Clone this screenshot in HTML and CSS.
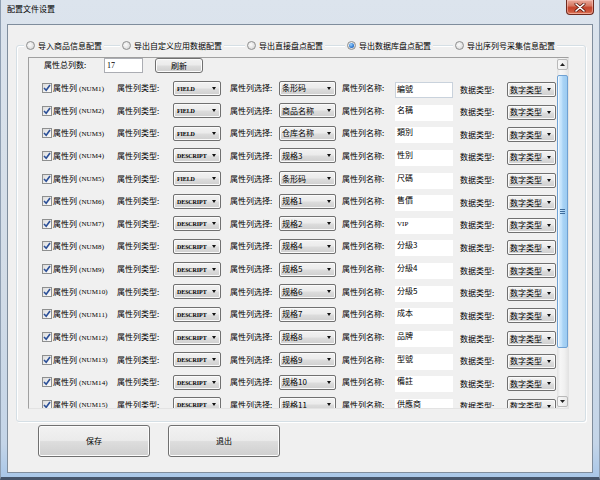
FILE: index.html
```html
<!DOCTYPE html>
<html lang="zh">
<head>
<meta charset="utf-8">
<title>配置文件设置</title>
<link rel="stylesheet" href="styles.css">
</head>
<body>
<div class="window">
  <div class="titlebar">
    <span class="title">配置文件设置</span>
    <div class="close">
      <svg width="12" height="9" viewBox="0 0 12 9"><path d="M2 1 L10 8 M10 1 L2 8" stroke="#5a1a10" stroke-width="3" stroke-linecap="round"/><path d="M2 1 L10 8 M10 1 L2 8" stroke="#fff" stroke-width="1.6" stroke-linecap="round"/></svg>
    </div>
  </div>
  <div class="client">
    <div class="group">
      <div class="radios">
        <label class="radio r1"><span class="rc"></span>导入商品信息配置</label>
        <label class="radio r2"><span class="rc"></span>导出自定义应用数据配置</label>
        <label class="radio r3"><span class="rc"></span>导出直接盘点配置</label>
        <label class="radio r4"><span class="rc on"></span>导出数据库盘点配置</label>
        <label class="radio r5"><span class="rc"></span>导出序列号采集信息配置</label>
      </div>
      <div class="panel">
        <div class="content">
          <div class="head">
            <span class="head-lbl">属性总列数:</span>
            <span class="num-input">17</span>
            <span class="btn small">刷新</span>
          </div>
          <div class="rows">
            <label class="cb"><span class="chk"><svg width="8" height="8" viewBox="0 0 8 8"><path d="M1 4 L3.2 6.3 L7 1" fill="none" stroke="#2b4f97" stroke-width="1.6"/></svg></span>属性列<span class="num">(NUM1)</span></label>
            <span class="lbl">属性列类型:</span><span class="combo c1"><span class="en">FIELD</span></span>
            <span class="lbl">属性列选择:</span><span class="combo c2">条形码</span>
            <span class="lbl">属性列名称:</span><span class="tbox focus">編號</span>
            <span class="lbl low">数据类型:</span><span class="combo c3 low">数字类型</span>

            <label class="cb"><span class="chk"><svg width="8" height="8" viewBox="0 0 8 8"><path d="M1 4 L3.2 6.3 L7 1" fill="none" stroke="#2b4f97" stroke-width="1.6"/></svg></span>属性列<span class="num">(NUM2)</span></label>
            <span class="lbl">属性列类型:</span><span class="combo c1"><span class="en">FIELD</span></span>
            <span class="lbl">属性列选择:</span><span class="combo c2">商品名称</span>
            <span class="lbl">属性列名称:</span><span class="tbox">名稱</span>
            <span class="lbl low">数据类型:</span><span class="combo c3 low">数字类型</span>

            <label class="cb"><span class="chk"><svg width="8" height="8" viewBox="0 0 8 8"><path d="M1 4 L3.2 6.3 L7 1" fill="none" stroke="#2b4f97" stroke-width="1.6"/></svg></span>属性列<span class="num">(NUM3)</span></label>
            <span class="lbl">属性列类型:</span><span class="combo c1"><span class="en">FIELD</span></span>
            <span class="lbl">属性列选择:</span><span class="combo c2">仓库名称</span>
            <span class="lbl">属性列名称:</span><span class="tbox">類別</span>
            <span class="lbl low">数据类型:</span><span class="combo c3 low">数字类型</span>

            <label class="cb"><span class="chk"><svg width="8" height="8" viewBox="0 0 8 8"><path d="M1 4 L3.2 6.3 L7 1" fill="none" stroke="#2b4f97" stroke-width="1.6"/></svg></span>属性列<span class="num">(NUM4)</span></label>
            <span class="lbl">属性列类型:</span><span class="combo c1"><span class="en">DESCRIPT</span></span>
            <span class="lbl">属性列选择:</span><span class="combo c2">规格3</span>
            <span class="lbl">属性列名称:</span><span class="tbox">性別</span>
            <span class="lbl low">数据类型:</span><span class="combo c3 low">数字类型</span>

            <label class="cb"><span class="chk"><svg width="8" height="8" viewBox="0 0 8 8"><path d="M1 4 L3.2 6.3 L7 1" fill="none" stroke="#2b4f97" stroke-width="1.6"/></svg></span>属性列<span class="num">(NUM5)</span></label>
            <span class="lbl">属性列类型:</span><span class="combo c1"><span class="en">FIELD</span></span>
            <span class="lbl">属性列选择:</span><span class="combo c2">条形码</span>
            <span class="lbl">属性列名称:</span><span class="tbox">尺碼</span>
            <span class="lbl low">数据类型:</span><span class="combo c3 low">数字类型</span>

            <label class="cb"><span class="chk"><svg width="8" height="8" viewBox="0 0 8 8"><path d="M1 4 L3.2 6.3 L7 1" fill="none" stroke="#2b4f97" stroke-width="1.6"/></svg></span>属性列<span class="num">(NUM6)</span></label>
            <span class="lbl">属性列类型:</span><span class="combo c1"><span class="en">DESCRIPT</span></span>
            <span class="lbl">属性列选择:</span><span class="combo c2">规格1</span>
            <span class="lbl">属性列名称:</span><span class="tbox">售價</span>
            <span class="lbl low">数据类型:</span><span class="combo c3 low">数字类型</span>

            <label class="cb"><span class="chk"><svg width="8" height="8" viewBox="0 0 8 8"><path d="M1 4 L3.2 6.3 L7 1" fill="none" stroke="#2b4f97" stroke-width="1.6"/></svg></span>属性列<span class="num">(NUM7)</span></label>
            <span class="lbl">属性列类型:</span><span class="combo c1"><span class="en">DESCRIPT</span></span>
            <span class="lbl">属性列选择:</span><span class="combo c2">规格2</span>
            <span class="lbl">属性列名称:</span><span class="tbox"><span class="en-s">VIP</span></span>
            <span class="lbl low">数据类型:</span><span class="combo c3 low">数字类型</span>

            <label class="cb"><span class="chk"><svg width="8" height="8" viewBox="0 0 8 8"><path d="M1 4 L3.2 6.3 L7 1" fill="none" stroke="#2b4f97" stroke-width="1.6"/></svg></span>属性列<span class="num">(NUM8)</span></label>
            <span class="lbl">属性列类型:</span><span class="combo c1"><span class="en">DESCRIPT</span></span>
            <span class="lbl">属性列选择:</span><span class="combo c2">规格4</span>
            <span class="lbl">属性列名称:</span><span class="tbox">分級3</span>
            <span class="lbl low">数据类型:</span><span class="combo c3 low">数字类型</span>

            <label class="cb"><span class="chk"><svg width="8" height="8" viewBox="0 0 8 8"><path d="M1 4 L3.2 6.3 L7 1" fill="none" stroke="#2b4f97" stroke-width="1.6"/></svg></span>属性列<span class="num">(NUM9)</span></label>
            <span class="lbl">属性列类型:</span><span class="combo c1"><span class="en">DESCRIPT</span></span>
            <span class="lbl">属性列选择:</span><span class="combo c2">规格5</span>
            <span class="lbl">属性列名称:</span><span class="tbox">分級4</span>
            <span class="lbl low">数据类型:</span><span class="combo c3 low">数字类型</span>

            <label class="cb"><span class="chk"><svg width="8" height="8" viewBox="0 0 8 8"><path d="M1 4 L3.2 6.3 L7 1" fill="none" stroke="#2b4f97" stroke-width="1.6"/></svg></span>属性列<span class="num">(NUM10)</span></label>
            <span class="lbl">属性列类型:</span><span class="combo c1"><span class="en">DESCRIPT</span></span>
            <span class="lbl">属性列选择:</span><span class="combo c2">规格6</span>
            <span class="lbl">属性列名称:</span><span class="tbox">分級5</span>
            <span class="lbl low">数据类型:</span><span class="combo c3 low">数字类型</span>

            <label class="cb"><span class="chk"><svg width="8" height="8" viewBox="0 0 8 8"><path d="M1 4 L3.2 6.3 L7 1" fill="none" stroke="#2b4f97" stroke-width="1.6"/></svg></span>属性列<span class="num">(NUM11)</span></label>
            <span class="lbl">属性列类型:</span><span class="combo c1"><span class="en">DESCRIPT</span></span>
            <span class="lbl">属性列选择:</span><span class="combo c2">规格7</span>
            <span class="lbl">属性列名称:</span><span class="tbox">成本</span>
            <span class="lbl low">数据类型:</span><span class="combo c3 low">数字类型</span>

            <label class="cb"><span class="chk"><svg width="8" height="8" viewBox="0 0 8 8"><path d="M1 4 L3.2 6.3 L7 1" fill="none" stroke="#2b4f97" stroke-width="1.6"/></svg></span>属性列<span class="num">(NUM12)</span></label>
            <span class="lbl">属性列类型:</span><span class="combo c1"><span class="en">DESCRIPT</span></span>
            <span class="lbl">属性列选择:</span><span class="combo c2">规格8</span>
            <span class="lbl">属性列名称:</span><span class="tbox">品牌</span>
            <span class="lbl low">数据类型:</span><span class="combo c3 low">数字类型</span>

            <label class="cb"><span class="chk"><svg width="8" height="8" viewBox="0 0 8 8"><path d="M1 4 L3.2 6.3 L7 1" fill="none" stroke="#2b4f97" stroke-width="1.6"/></svg></span>属性列<span class="num">(NUM13)</span></label>
            <span class="lbl">属性列类型:</span><span class="combo c1"><span class="en">DESCRIPT</span></span>
            <span class="lbl">属性列选择:</span><span class="combo c2">规格9</span>
            <span class="lbl">属性列名称:</span><span class="tbox">型號</span>
            <span class="lbl low">数据类型:</span><span class="combo c3 low">数字类型</span>

            <label class="cb"><span class="chk"><svg width="8" height="8" viewBox="0 0 8 8"><path d="M1 4 L3.2 6.3 L7 1" fill="none" stroke="#2b4f97" stroke-width="1.6"/></svg></span>属性列<span class="num">(NUM14)</span></label>
            <span class="lbl">属性列类型:</span><span class="combo c1"><span class="en">DESCRIPT</span></span>
            <span class="lbl">属性列选择:</span><span class="combo c2">规格10</span>
            <span class="lbl">属性列名称:</span><span class="tbox">備註</span>
            <span class="lbl low">数据类型:</span><span class="combo c3 low">数字类型</span>

            <label class="cb"><span class="chk"><svg width="8" height="8" viewBox="0 0 8 8"><path d="M1 4 L3.2 6.3 L7 1" fill="none" stroke="#2b4f97" stroke-width="1.6"/></svg></span>属性列<span class="num">(NUM15)</span></label>
            <span class="lbl">属性列类型:</span><span class="combo c1"><span class="en">DESCRIPT</span></span>
            <span class="lbl">属性列选择:</span><span class="combo c2">规格11</span>
            <span class="lbl">属性列名称:</span><span class="tbox">供應商</span>
            <span class="lbl low">数据类型:</span><span class="combo c3 low">数字类型</span>
          </div>
        </div>
        <div class="scroll">
          <div class="sb-btn"><svg width="5" height="3" viewBox="0 0 5 3"><path d="M0 3h5L2.5 0z" fill="#222"/></svg></div>
          <div class="thumb"><span class="grip"></span></div>
          <div class="sb-space"></div>
          <div class="sb-btn"><svg width="5" height="3" viewBox="0 0 5 3"><path d="M0 0h5L2.5 3z" fill="#222"/></svg></div>
        </div>
      </div>
    </div>
    <div class="btns">
      <span class="btn big">保存</span>
      <span class="btn big">退出</span>
    </div>
  </div>
</div>
</body>
</html>
```

FILE: styles.css
```css
* { box-sizing: border-box; }

body {
  margin: 0;
  width: 600px;
  height: 480px;
  overflow: hidden;
  font-family: "Noto Sans CJK SC", "Noto Sans CJK TC", sans-serif;
  font-size: 8px;
  line-height: 1;
  color: #000;
  background: #3d4a5b;
}

.window {
  width: 600px;
  height: 480px;
  display: flex;
  flex-direction: column;
  background: linear-gradient(#dce4ed 0, #d2dce7 60%, #c4d5e8 93%, #a9c7e8 100%);
  border-bottom: 3px solid #46556a;
  border-left: 1px solid #8f9fb2;
  border-right: 1px solid #8f9fb2;
}

.titlebar {
  height: 24px;
  flex: none;
  display: flex;
  align-items: flex-start;
}

.title {
  margin: 5px 0 0 6px;
  line-height: 8px;
}

.close {
  margin-left: auto;
  margin-right: 5px;
  width: 28px;
  height: 15px;
  border: 1px solid #6e2a1e;
  border-top: none;
  border-radius: 0 0 4px 4px;
  background: linear-gradient(#e9a99b 0%, #d77a64 40%, #c4432b 55%, #cf5a3f 85%, #e48a6b 100%);
  box-shadow: inset 0 0 0 1px rgba(255, 210, 200, 0.5);
  display: flex;
  align-items: center;
  justify-content: center;
}

.client {
  flex: 1;
  margin: 0 6px 4px 6px;
  border: 1px solid #7f8d9c;
  background: #f0f0f0;
  display: flex;
  flex-direction: column;
}

.group {
  flex: none;
  margin: 20px 0 0 8px;
  width: 570px;
  height: 377px;
  border: 1px solid #d5dfe5;
  border-radius: 3px;
  box-shadow: inset 1px 1px 0 #fff, 1px 1px 0 #fff;
  display: flex;
  flex-direction: column;
}

.radios {
  display: flex;
  height: 13px;
  margin-top: -7px;
  align-items: center;
}

.radio {
  display: flex;
  align-items: center;
  height: 13px;
  padding: 0 2px;
  background: #f0f0f0;
  white-space: nowrap;
}

.r1 { margin-left: 7px; }
.r2 { margin-left: 16px; }
.r3 { margin-left: 21px; }
.r4 { margin-left: 20px; }
.r5 { margin-left: 20px; }

.rc {
  width: 9px;
  height: 9px;
  margin-right: 3px;
  border-radius: 50%;
  border: 1px solid #8e8f8f;
  background: radial-gradient(circle at 40% 40%, #fbfbfb 0, #e6e6e6 50%, #c9c9c9 100%);
  display: flex;
  align-items: center;
  justify-content: center;
}

.rc.on::after {
  content: "";
  width: 5px;
  height: 5px;
  border-radius: 50%;
  background: radial-gradient(circle at 40% 35%, #9fd4ff 0, #2f7ad1 60%, #1a4f9a 100%);
}

.panel {
  flex: none;
  margin: 5px 0 0 11px;
  width: 541px;
  height: 352px;
  border: 1px solid;
  border-color: #a0a0a0 #e3e3e3 #e3e3e3 #a0a0a0;
  display: flex;
}

.content {
  flex: 1;
  overflow: hidden;
}

.head {
  height: 16px;
  display: flex;
  align-items: flex-start;
  padding-left: 15px;
}

.head-lbl {
  width: 60px;
  margin-top: 3px;
}

.num-input {
  width: 39px;
  height: 15px;
  border: 1px solid #abadb3;
  background: #fff;
  font-family: "Liberation Serif", serif;
  font-size: 8px;
  padding-left: 2px;
  display: flex;
  align-items: center;
}

.btn {
  display: flex;
  align-items: center;
  justify-content: center;
  border: 1px solid #707070;
  border-radius: 3px;
  background: linear-gradient(#f2f2f2 0%, #ebebeb 48%, #dddddd 52%, #cfcfcf 100%);
  box-shadow: inset 0 0 0 1px #fcfcfc;
}

.btn.small {
  margin-left: 12px;
  width: 48px;
  height: 15px;
}

.btn.big {
  width: 112px;
  height: 32px;
}

.rows {
  padding: 2.7px 0 0 13px;
  display: grid;
  grid-template-columns: 75px 56px 57px 49px 63px 53px 65px 47px 49px;
  grid-auto-rows: 22.65px;
  align-items: center;
}

.cb {
  display: flex;
  align-items: center;
  white-space: nowrap;
}

.chk {
  width: 10px;
  height: 10px;
  margin-right: 1px;
  border: 1px solid #8e8f8f;
  background: linear-gradient(135deg, #dcdcdc, #fdfdfd);
  display: flex;
  align-items: center;
  justify-content: center;
}

.num {
  font-family: "Liberation Serif", serif;
  font-size: 7px;
  margin-left: 2px;
  padding-top: 2px;
  letter-spacing: 0.1px;
}

.lbl { white-space: nowrap; }

.low { margin-top: 3px; }

.combo {
  height: 15px;
  border: 1px solid #707070;
  border-radius: 2px;
  background: linear-gradient(#f2f2f2 0%, #ebebeb 48%, #dddddd 52%, #cfcfcf 100%);
  box-shadow: inset 0 0 0 1px #fafafa;
  display: flex;
  align-items: center;
  padding-left: 3px;
  white-space: nowrap;
}

.combo::after {
  content: "";
  margin-left: auto;
  margin-right: 4px;
  border-left: 2.5px solid transparent;
  border-right: 2.5px solid transparent;
  border-top: 3px solid #111;
}

.c1 { width: 48px; }
.c2 { width: 57px; padding-left: 2px; }
.c3 { width: 49px; padding-left: 2px; }

.en {
  font-family: "Liberation Serif", serif;
  font-weight: bold;
  font-size: 6px;
  letter-spacing: -0.1px;
  padding-top: 1px;
}

.en-s {
  font-family: "Liberation Serif", serif;
  font-size: 7px;
}

.tbox {
  width: 58px;
  height: 16px;
  margin-top: 4px;
  padding: 1px 0 0 2px;
  background: #fff;
  white-space: nowrap;
}

.tbox.focus {
  border: 1px solid #c9d2dc;
  padding: 2px 0 0 1px;
}

.scroll {
  width: 11px;
  flex: none;
  display: flex;
  flex-direction: column;
  padding: 1px 0;
  background: linear-gradient(to right, #e2e2e2, #f6f6f6 30%, #f0f0f0 70%, #e4e4e4);
}

.sb-btn {
  height: 11px;
  flex: none;
  border: 1px solid #b9b9b9;
  border-radius: 2px;
  background: linear-gradient(to right, #f8f8f8, #e9e9e9);
  display: flex;
  align-items: center;
  justify-content: center;
}

.thumb {
  margin-top: 5px;
  height: 273px;
  flex: none;
  border: 1px solid #6fa1d3;
  border-radius: 2px;
  background: linear-gradient(to right, #dcefff 0%, #c0e1fb 40%, #a9d3f5 55%, #9ccbf1 100%);
  box-shadow: inset 1px 0 0 #f2f9ff;
  display: flex;
  align-items: center;
  justify-content: center;
}

.grip {
  width: 5px;
  height: 5px;
  background: linear-gradient(#3f6d9c 0, #3f6d9c 1px, transparent 1px, transparent 2px, #3f6d9c 2px, #3f6d9c 3px, transparent 3px, transparent 4px, #3f6d9c 4px, #3f6d9c 5px);
}

.sb-space { flex: 1; }

.btns {
  display: flex;
  gap: 18px;
  margin: 3px 0 0 30px;
}
```
